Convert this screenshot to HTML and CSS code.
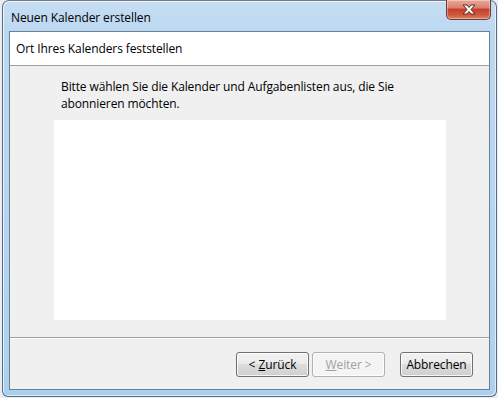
FILE: index.html
```html
<!DOCTYPE html>
<html>
<head>
<meta charset="utf-8">
<link rel="stylesheet" href="styles.css">
</head>
<body>
<div class="desktop">
  <div class="window">
    <div class="titlebar">
      <span class="title">Neuen Kalender erstellen</span>
      <div class="close">
        <svg width="18" height="11" viewBox="0 0 18 11">
          <path d="M3 1 H7 L9 3.5 L11 1 H15 L11 5.5 L15 10 H11 L9 7.5 L7 10 H3 L7 5.5 Z" fill="#fff" stroke="#5a2a2a" stroke-width="1" stroke-linejoin="round"/>
        </svg>
      </div>
    </div>
    <div class="client">
      <div class="header">Ort Ihres Kalenders feststellen</div>
      <div class="content">
        <p class="intro">Bitte wählen Sie die Kalender und Aufgabenlisten aus, die Sie<br>abonnieren möchten.</p>
        <div class="listbox"></div>
      </div>
      <div class="footer">
        <button class="btn"><span class="lt">&lt;</span> <u>Z</u>urück</button>
        <button class="btn disabled"><u>W</u>eiter &gt;</button>
        <button class="btn cancel">Abbrechen</button>
      </div>
    </div>
  </div>
</div>
</body>
</html>
```

FILE: styles.css
```css
html, body {
  margin: 0;
  padding: 0;
}
body {
  width: 498px;
  height: 398px;
  overflow: hidden;
  background: #e8eef4;
  font-family: "Open Sans", "Noto Sans", sans-serif;
  font-size: 12px;
}
.desktop {
  padding: 0 0 0 2px;
  height: 398px;
  box-sizing: border-box;
}
.window {
  position: relative;
  width: 495px;
  height: 397px;
  box-sizing: border-box;
  border: 1px solid #5b6b7c;
  border-top-color: #707a86;
  border-radius: 7px 7px 6px 6px;
  background: linear-gradient(to bottom, #c6def3 0px, #bcd8f1 30px, #b6d6f0 200px, #a9d1ef 397px);
  padding: 0 6px 6px 6px;
  display: flex;
  flex-direction: column;
  box-shadow: inset 1px 1px 0 rgba(255,255,255,0.7), inset -1px -1px 0 rgba(255,255,255,0.6);
}
.titlebar {
  height: 30px;
  display: flex;
  align-items: center;
  padding-left: 2px;
  flex: none;
}
.title {
  color: #000;
  font-size: 12px;
  letter-spacing: -0.1px;
  padding-top: 3px;
}
.close {
  position: absolute;
  top: -1px;
  right: 5px;
  width: 45px;
  height: 20px;
  box-sizing: border-box;
  border: 1px solid #6c3a3a;
  border-top: none;
  border-radius: 0 0 5px 5px;
  background: linear-gradient(to bottom, #e9a99b 0%, #d9816f 40%, #c5402a 50%, #cf5a3e 80%, #e0855c 100%);
  display: flex;
  align-items: center;
  justify-content: center;
  box-shadow: inset 0 0 0 1px rgba(255,255,255,0.35);
}
.client {
  flex: 1;
  display: flex;
  flex-direction: column;
  border: 1px solid #6d7f92;
  background: #f0f0f0;
}
.header {
  height: 33px;
  background: #fff;
  border-bottom: 1px solid #a0a0a0;
  display: flex;
  align-items: center;
  padding-left: 6px;
  letter-spacing: -0.1px;
  color: #000;
}
.content {
  flex: 1;
  padding: 12px 0 0 44px;
  border-bottom: 1px solid #a0a0a0;
  box-shadow: 0 1px 0 #fff;
}
.intro {
  margin: 0 0 0 7px;
  line-height: 17px;
  color: #000;
  letter-spacing: -0.12px;
}
.listbox {
  margin-top: 8px;
  width: 392px;
  height: 200px;
  background: #fff;
}
.footer {
  height: 51px;
  flex: none;
  display: flex;
  align-items: center;
  padding-left: 226px;
  padding-top: 1px;
  box-sizing: border-box;
}
.btn {
  width: 73px;
  height: 25px;
  margin: 0 3px 0 0;
  padding: 0;
  font-family: inherit;
  font-size: 12px;
  letter-spacing: -0.1px;
  color: #000;
  border: 1px solid #707070;
  border-radius: 3px;
  background: linear-gradient(to bottom, #f2f2f2 0%, #ebebeb 45%, #dddddd 50%, #cfcfcf 100%);
  box-shadow: inset 0 0 0 1px rgba(255,255,255,0.8);
}
.btn u {
  text-decoration: underline;
}
.btn.disabled {
  color: #a0a0a0;
  border-color: #adb2b5;
  background: #f4f4f4;
}
.btn.cancel {
  margin-left: 12px;
}
```
